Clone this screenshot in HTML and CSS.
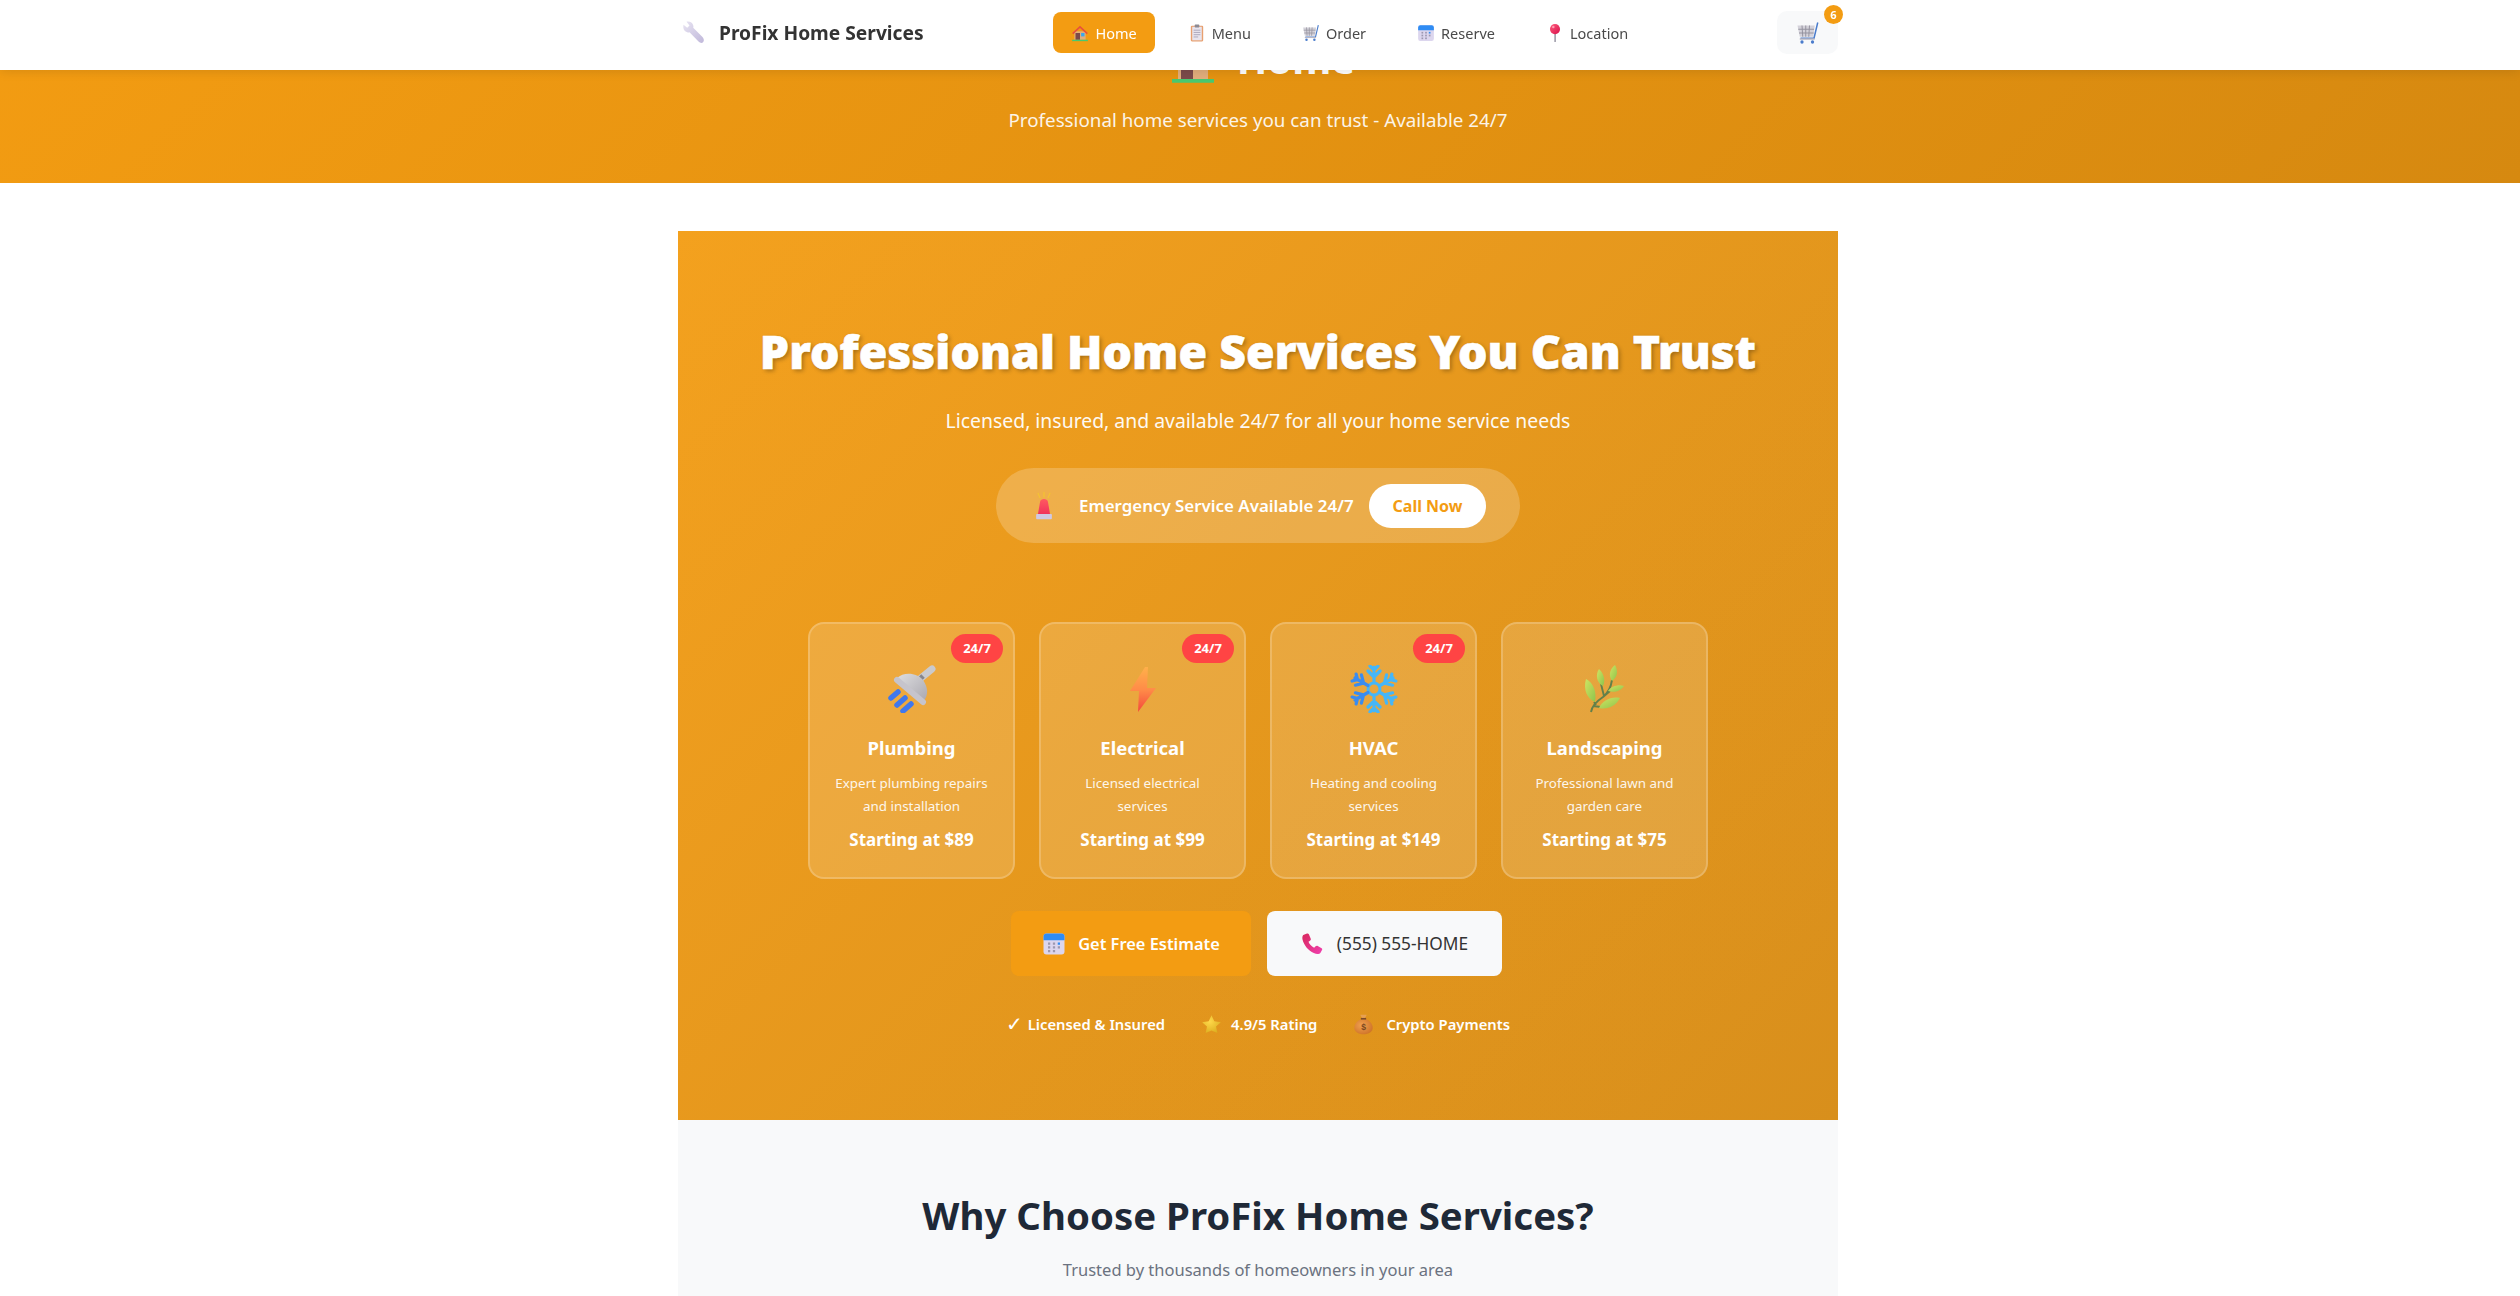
FILE: index.html
```html
<!DOCTYPE html>
<html lang="en">
<head>
  <meta charset="UTF-8" />
  <meta name="viewport" content="width=device-width, initial-scale=1.0" />
  <title>ProFix Home Services</title>
  <link rel="stylesheet" href="styles.css">
</head>
<body>
  <!-- icon set -->
  <svg class="icon-defs" xmlns="http://www.w3.org/2000/svg">
    <defs>
      <linearGradient id="g-steel" x1="0" y1="0" x2="1" y2="1"><stop offset="0" stop-color="#dedee0"/><stop offset="1" stop-color="#a9a7af"/></linearGradient>
      <linearGradient id="g-lav" x1="0" y1="0" x2="1" y2="1"><stop offset="0" stop-color="#e8e4f2"/><stop offset="1" stop-color="#c0b8da"/></linearGradient>
      <linearGradient id="g-bolt" x1="0" y1="0" x2="0" y2="1"><stop offset="0" stop-color="#ffb04a"/><stop offset="0.5" stop-color="#ff8c48"/><stop offset="1" stop-color="#f4483c"/></linearGradient>
      <linearGradient id="g-leaf" x1="0" y1="0" x2="1" y2="1"><stop offset="0" stop-color="#cfe462"/><stop offset="1" stop-color="#8fc44c"/></linearGradient>
      <linearGradient id="g-phone" x1="0" y1="0" x2="1" y2="1"><stop offset="0" stop-color="#d8285c"/><stop offset="1" stop-color="#f040b0"/></linearGradient>
      <linearGradient id="g-pin" x1="0" y1="0" x2="1" y2="1"><stop offset="0" stop-color="#ff5c7c"/><stop offset="1" stop-color="#d8104c"/></linearGradient>
      <linearGradient id="g-siren" x1="0" y1="0" x2="0" y2="1"><stop offset="0" stop-color="#ff5a60"/><stop offset="1" stop-color="#f0305c"/></linearGradient>
      <radialGradient id="g-star" cx="0.4" cy="0.35" r="0.8"><stop offset="0" stop-color="#ffd84a"/><stop offset="1" stop-color="#d8a818"/></radialGradient>
      <radialGradient id="g-bag" cx="0.4" cy="0.4" r="0.8"><stop offset="0" stop-color="#f0a050"/><stop offset="1" stop-color="#c86a20"/></radialGradient>
      <symbol id="i-wrench" viewBox="0 0 32 32">
        <path d="M2 5l5 4 3-3-4-5c4-1 8 1 9 5 .3 1 .3 2 0 3l12 12c2 2 3 5 1.300 7s-4.300 1.300-6.300-.7L10 15c-1 .3-2 .3-3 0C3 14 1 10 2 5z" fill="url(#g-lav)"/>
      </symbol>
      <symbol id="i-house" viewBox="0 0 32 32">
        <rect x="6" y="13" width="20" height="15" fill="#e2ae7c"/>
        <path d="M2 16L16 3l14 13-2 2L16 7 4 18z" fill="#e8503c"/>
        <rect x="8" y="16" width="8" height="12" fill="#7c4a4a"/>
        <rect x="18" y="16" width="6" height="6" fill="#38a8f0"/>
        <rect x="2" y="28" width="28" height="2.500" fill="#48c870"/>
      </symbol>
      <symbol id="i-clip" viewBox="0 0 32 32">
        <rect x="5" y="3" width="22" height="28" rx="2" fill="#e8a070"/>
        <rect x="7.500" y="5" width="17" height="24" fill="#e8e4ee"/>
        <rect x="12" y="1" width="8" height="5" rx="1" fill="#8c8a94"/>
        <path d="M10 11h12M10 15h12M10 19h12M10 23h8" stroke="#a8a4b8" stroke-width="1.600"/>
      </symbol>
      <symbol id="i-cart" viewBox="0 0 32 32">
        <path d="M2 6h23l-2 15H5z" fill="#d4d2da"/>
        <path d="M8 6l1 15M13 6v15M18 6l-1 15M3 11h21M4 16h19.500" stroke="#94929e" stroke-width="1.300"/>
        <path d="M29 2l-5 21H6" fill="none" stroke="#4a7ccc" stroke-width="2"/>
        <path d="M5 24h20" stroke="#b8b6c2" stroke-width="2"/>
        <circle cx="8" cy="28" r="2.200" fill="#4a7ccc"/><circle cx="22" cy="28" r="2.200" fill="#4a7ccc"/>
      </symbol>
      <symbol id="i-cal" viewBox="0 0 32 32">
        <rect x="2" y="2" width="28" height="28" rx="4" fill="#dcd6ee"/>
        <path d="M2 11V6a4 4 0 014-4h20a4 4 0 014 4v5z" fill="#2f8cf4"/>
        <g fill="#9c98b0"><rect x="8" y="14" width="3" height="3"/><rect x="14.500" y="14" width="3" height="3"/><rect x="8" y="19" width="3" height="3"/><rect x="14.500" y="19" width="3" height="3"/><rect x="21" y="19" width="3" height="3"/><rect x="8" y="24" width="3" height="3"/><rect x="14.500" y="24" width="3" height="3"/></g>
        <rect x="21" y="14" width="3" height="3" fill="#2f8cf4"/>
      </symbol>
      <symbol id="i-pin" viewBox="0 0 32 32">
        <rect x="14.800" y="14" width="2.800" height="18" rx="1" fill="#9c9aa8"/>
        <circle cx="16" cy="9" r="9" fill="url(#g-pin)"/>
        <circle cx="13" cy="5.500" r="2.200" fill="#ff9cb0"/>
      </symbol>
      <symbol id="i-siren" viewBox="0 0 32 32">
        <path d="M9 26l2.500-15c.6-4 8.400-4 9 0L23 26z" fill="url(#g-siren)"/>
        <rect x="7" y="25" width="18" height="6" rx="1" fill="#cfc8e4"/>
        <path d="M16 0v6M9 1l2.500 6M23 1l-2.500 6" stroke="#f4c430" stroke-width="1.300"/>
      </symbol>
      <symbol id="i-phone" viewBox="0 0 32 32">
        <path d="M3 4l5-2c1-.4 2 0 2.500 1l2.500 6c.4 1 0 2-1 2.500l-2 1.500c1 3 4 6 7.500 8l2-2c.8-.8 1.800-1 2.800-.5l5.200 3c1 .6 1 1.600.5 2.500l-2 3.500C24 30 21 30 17 28 10 25 4 18 2 10 1.500 7 2 5 3 4z" fill="url(#g-phone)"/>
      </symbol>
      <symbol id="i-star" viewBox="0 0 32 32">
        <path d="M16 2l4.300 9.200 10 1.200-7.400 6.800 2 9.900L16 25.100l-8.900 4 2-9.900L1.700 12.400l10-1.200z" fill="url(#g-star)"/>
      </symbol>
      <symbol id="i-bag" viewBox="0 0 32 32">
        <path d="M11 1h10l-3 6h-4z" fill="#e8a050"/>
        <path d="M12 8h8c7 3 10 9 10 13 0 6-6 10-14 10S2 27 2 21c0-4 3-10 10-13z" fill="url(#g-bag)"/>
        <rect x="12" y="6" width="8" height="2.500" fill="#7c4a28"/>
        <text x="16" y="25" font-size="13" font-weight="700" font-family="Liberation Sans, sans-serif" text-anchor="middle" fill="#7a4820">$</text>
      </symbol>
      <symbol id="i-shower" viewBox="0 0 48 48">
        <path d="M33 13L44 4" stroke="#cacacd" stroke-width="7" stroke-linecap="round"/>
        <path d="M29 17l6-6" stroke="#86868c" stroke-width="5"/>
        <path d="M9 13C16 6 30 8 35 15c5 7 6 15 0 22z" fill="url(#g-steel)"/>
        <path d="M9 15l26 22" stroke="#c6c4cc" stroke-width="6" stroke-linecap="round"/>
        <path d="M3 33l7-6M9 40l8-7M15 46l8-7" stroke="#3f78ee" stroke-width="5.500" stroke-linecap="round"/>
      </symbol>
      <symbol id="i-bolt" viewBox="0 0 48 48">
        <path d="M26 2L11 26h9l-1 21 18-24h-9l1-21z" fill="url(#g-bolt)"/>
      </symbol>
      <symbol id="i-snow" viewBox="0 0 48 48">
        <g fill="none" stroke-width="3.200" stroke-linecap="round">
          <g id="snow-arm"><path d="M24 17V2M18 6l6 6 6-6M20 1l4 4 4-4"/></g>
        </g>
      </symbol>
      <symbol id="i-herb" viewBox="0 0 48 48">
        <path d="M10 47C11 40 16 36 22 32 27 28 30 22 31 15M22 32l7-6M12 41l8 1M23 31l-3-12M13 37l2 3" fill="none" stroke="#62804a" stroke-width="1.900"/>
        <g fill="url(#g-leaf)">
          <path d="M5 14C12 17 16 27 14 37 6 34 2 24 5 14z"/>
          <path d="M18 4C22 8 25 14 22 21 16 18 14 10 18 4z"/>
          <path d="M34 0C37 5 37 12 31 16 27 10 29 4 34 0z"/>
          <path d="M43 21C40 26 33 28 27 26 30 21 38 19 43 21z"/>
          <path d="M39 33C35 41 26 45 18 43 21 36 30 31 39 33z"/>
        </g>
      </symbol>
    </defs>
  </svg>

  <nav class="navbar">
    <div class="nav-inner">
      <a class="logo"><svg class="ico-logo"><use href="#i-wrench"/></svg>ProFix Home Services</a>
      <div class="nav-links">
        <a class="nav-link active"><svg class="ico-nav"><use href="#i-house"/></svg>Home</a>
        <a class="nav-link"><svg class="ico-nav"><use href="#i-clip"/></svg>Menu</a>
        <a class="nav-link"><svg class="ico-nav"><use href="#i-cart"/></svg>Order</a>
        <a class="nav-link"><svg class="ico-nav"><use href="#i-cal"/></svg>Reserve</a>
        <a class="nav-link"><svg class="ico-nav"><use href="#i-pin"/></svg>Location</a>
      </div>
      <button class="cart-btn"><svg class="ico-cart"><use href="#i-cart"/></svg><span class="cart-count">6</span></button>
    </div>
  </nav>

  <header class="page-header">
    <h1 class="page-title"><svg class="ico-title"><use href="#i-house"/></svg>Home</h1>
    <p class="page-sub">Professional home services you can trust - Available 24/7</p>
  </header>

  <main class="container">
    <section class="hero">
      <h2 class="hero-title">Professional Home Services You Can Trust</h2>
      <p class="hero-sub">Licensed, insured, and available 24/7 for all your home service needs</p>

      <div class="emergency">
        <svg class="ico-siren"><use href="#i-siren"/></svg>
        <span class="emergency-text">Emergency Service Available 24/7</span>
        <button class="call-btn">Call Now</button>
      </div>

      <div class="service-grid">
        <div class="service-card">
          <span class="badge">24/7</span>
          <svg class="ico-service"><use href="#i-shower"/></svg>
          <h3>Plumbing</h3>
          <p>Expert plumbing repairs and installation</p>
          <div class="price">Starting at $89</div>
        </div>
        <div class="service-card">
          <span class="badge">24/7</span>
          <svg class="ico-service"><use href="#i-bolt"/></svg>
          <h3>Electrical</h3>
          <p>Licensed electrical services</p>
          <div class="price">Starting at $99</div>
        </div>
        <div class="service-card">
          <span class="badge">24/7</span>
          <svg class="ico-service" viewBox="0 0 48 48">
            <circle class="snow-ring" cx="24" cy="24" r="6"/>
            <use class="snow-light" href="#snow-arm"/>
            <use class="snow-light" href="#snow-arm" transform="rotate(60 24 24)"/>
            <use class="snow-light" href="#snow-arm" transform="rotate(120 24 24)"/>
            <use class="snow-light" href="#snow-arm" transform="rotate(180 24 24)"/>
            <use class="snow-dark" href="#snow-arm" transform="rotate(240 24 24)"/>
            <use class="snow-dark" href="#snow-arm" transform="rotate(300 24 24)"/>
          </svg>
          <h3>HVAC</h3>
          <p>Heating and cooling services</p>
          <div class="price">Starting at $149</div>
        </div>
        <div class="service-card">
          <svg class="ico-service"><use href="#i-herb"/></svg>
          <h3>Landscaping</h3>
          <p>Professional lawn and garden care</p>
          <div class="price">Starting at $75</div>
        </div>
      </div>

      <div class="cta-row">
        <button class="cta cta-primary"><svg class="ico-cta"><use href="#i-cal"/></svg>Get Free Estimate</button>
        <button class="cta cta-light"><svg class="ico-cta"><use href="#i-phone"/></svg>(555) 555-HOME</button>
      </div>

      <div class="trust-row">
        <span class="trust"><span class="check">✓</span>Licensed &amp; Insured</span>
        <span class="trust"><svg class="ico-trust"><use href="#i-star"/></svg>4.9/5 Rating</span>
        <span class="trust trust-last"><svg class="ico-trust"><use href="#i-bag"/></svg>Crypto Payments</span>
      </div>
    </section>

    <section class="why">
      <h2>Why Choose ProFix Home Services?</h2>
      <p>Trusted by thousands of homeowners in your area</p>
    </section>
  </main>
</body>
</html>
```

FILE: styles.css
```css
* {
  box-sizing: border-box;
}
html, body {
  height: 1296px;
  overflow: hidden;
}
body {
  margin: 0;
  background: #fff;
  color: #333;
  font-family: "Noto Sans", sans-serif;
}
.icon-defs {
  position: absolute;
  width: 0;
  height: 0;
}
button {
  font-family: inherit;
  border: none;
}

/* nav */
.navbar {
  position: fixed;
  top: 0;
  left: 0;
  right: 0;
  height: 70px;
  background: #fff;
  box-shadow: 0 2px 10px rgba(0,0,0,0.1);
  z-index: 10;
  padding-right: 4px;
  padding-bottom: 5px;
}
.nav-inner {
  width: 1160px;
  height: 100%;
  margin: 0 auto;
  display: flex;
  align-items: center;
  justify-content: space-between;
}
.logo {
  display: flex;
  align-items: center;
  gap: 13px;
  font-size: 19.200px;
  font-weight: 700;
  color: #333;
  padding-left: 4px;
}
.ico-logo {
  width: 24px;
  height: 24px;
}
.nav-links {
  display: flex;
  gap: 15px;
  margin-left: -1px;
}
.nav-link {
  display: flex;
  align-items: center;
  gap: 6px;
  height: 41px;
  padding: 0 18px;
  border-radius: 8px;
  font-size: 14.500px;
  color: #4a4a4a;
}
.nav-link.active {
  background: #f39c12;
  color: #fff;
}
.ico-nav {
  width: 18px;
  height: 18px;
}
.cart-btn {
  position: relative;
  width: 61px;
  height: 43px;
  background: #f8f9fa;
  border-radius: 10px;
  display: flex;
  align-items: center;
  justify-content: center;
}
.ico-cart {
  width: 24px;
  height: 24px;
}
.cart-count {
  position: absolute;
  top: -6px;
  right: -5px;
  width: 19px;
  height: 19px;
  border-radius: 50%;
  background: #f39c12;
  color: #fff;
  font-size: 11px;
  font-weight: 700;
  line-height: 19px;
  text-align: center;
}

/* page header, its top sits under the nav */
.page-header {
  height: 183px;
  padding-top: 29px;
  padding-right: 4px;
  background: linear-gradient(135deg, #f39c12, #d68910);
  color: #fff;
  text-align: center;
}
.page-title {
  margin: 0;
  height: 60px;
  padding-left: 8px;
  display: flex;
  align-items: center;
  justify-content: center;
  gap: 20px;
  font-size: 40px;
  font-weight: 700;
  line-height: 60px;
}
.ico-title {
  width: 48px;
  height: 48px;
  margin-top: 4px;
}
.page-sub {
  margin: 17px 0 0;
  font-size: 18.800px;
  line-height: 28px;
  opacity: 0.9;
}

/* main column */
.container {
  width: 1160px;
  margin: 48px auto 0;
  position: relative;
  left: -2px;
}
.hero {
  height: 889px;
  padding-top: 82px;
  background: linear-gradient(rgba(255,255,255,0.05), rgba(255,255,255,0.05)), linear-gradient(135deg, #f39c12, #d68910);
  color: #fff;
  text-align: center;
}
.hero-title {
  margin: 0;
  font-size: 46.400px;
  font-weight: 900;
  line-height: 77px;
  -webkit-text-stroke: 0.6px #fff;
  text-shadow: 2px 2px 4px rgba(0,0,0,0.3);
}
.hero-sub {
  margin: 14px 0 0;
  font-size: 19.400px;
  line-height: 33px;
  opacity: 0.95;
}
.emergency {
  width: 524px;
  height: 75px;
  margin: 31px auto 0;
  padding: 0 34px 0 34px;
  display: flex;
  align-items: center;
  background: rgba(255,255,255,0.2);
  border-radius: 38px;
}
.ico-siren {
  width: 28px;
  height: 30px;
  flex-shrink: 0;
}
.emergency-text {
  margin-left: 21px;
  font-size: 16.900px;
  font-weight: 600;
  white-space: nowrap;
}
.call-btn {
  margin-left: auto;
  width: 117px;
  height: 44px;
  background: #fff;
  border-radius: 22px;
  color: #f39c12;
  font-size: 16px;
  font-weight: 700;
}
.service-grid {
  width: 900px;
  margin: 79px auto 0;
  display: grid;
  grid-template-columns: repeat(4, 1fr);
  gap: 24px;
}
.service-card {
  position: relative;
  height: 257px;
  padding: 41px 24px 0;
  background: rgba(255,255,255,0.15);
  border: 2px solid rgba(255,255,255,0.2);
  border-radius: 16px;
}
.badge {
  position: absolute;
  top: 10px;
  right: 10px;
  width: 52px;
  height: 29px;
  border-radius: 15px;
  background: #ff4444;
  color: #fff;
  font-size: 13px;
  font-weight: 700;
  line-height: 29px;
}
.ico-service {
  display: block;
  width: 48px;
  height: 48px;
  margin: 0 auto;
}
.snow-ring {
  fill: none;
  stroke: #45b6f8;
  stroke-width: 3;
}
.snow-light {
  fill: none;
  stroke: #45b6f8;
  stroke-width: 3.200;
  stroke-linecap: round;
}
.snow-dark {
  fill: none;
  stroke: #3a8cf0;
  stroke-width: 3.200;
  stroke-linecap: round;
}
.service-card h3 {
  margin: 20px 0 0;
  font-size: 18.500px;
  font-weight: 700;
  line-height: 30px;
}
.service-card p {
  margin: 9px -4px 0;
  font-size: 13.400px;
  line-height: 23px;
  opacity: 0.9;
}
.price {
  margin-top: 8px;
  font-size: 17px;
  font-weight: 700;
  line-height: 28px;
}
.cta-row {
  margin-top: 32px;
  padding-right: 3px;
  display: flex;
  justify-content: center;
  gap: 16px;
}
.cta {
  height: 65px;
  display: flex;
  align-items: center;
  justify-content: center;
  gap: 12px;
  border-radius: 8px;
}
.cta-primary {
  width: 240px;
  background: #f39c12;
  color: #fff;
  font-size: 16.400px;
  font-weight: 600;
}
.cta-light {
  width: 235px;
  background: #f8f9fa;
  color: #333;
  font-size: 17.300px;
  font-weight: 400;
}
.ico-cta {
  width: 24px;
  height: 24px;
}
.trust-row {
  margin-top: 36px;
  display: flex;
  justify-content: center;
  gap: 36px;
}
.trust {
  display: flex;
  align-items: center;
  gap: 9px;
  font-size: 14.800px;
  font-weight: 600;
  line-height: 24px;
}
.trust-last {
  gap: 12px;
}
.check {
  font-family: "DejaVu Sans", sans-serif;
  font-weight: 400;
  font-size: 20px;
  margin-right: -4px;
}
.ico-trust {
  width: 21px;
  height: 21px;
}

.why {
  height: 400px;
  padding-top: 65px;
  background: #f8f9fa;
  text-align: center;
}
.why h2 {
  margin: 0;
  font-size: 38.400px;
  font-weight: 700;
  line-height: 60px;
  color: #1f2937;
}
.why p {
  margin: 11px 0 0;
  font-size: 16.500px;
  line-height: 28px;
  color: #6b7280;
}
```
